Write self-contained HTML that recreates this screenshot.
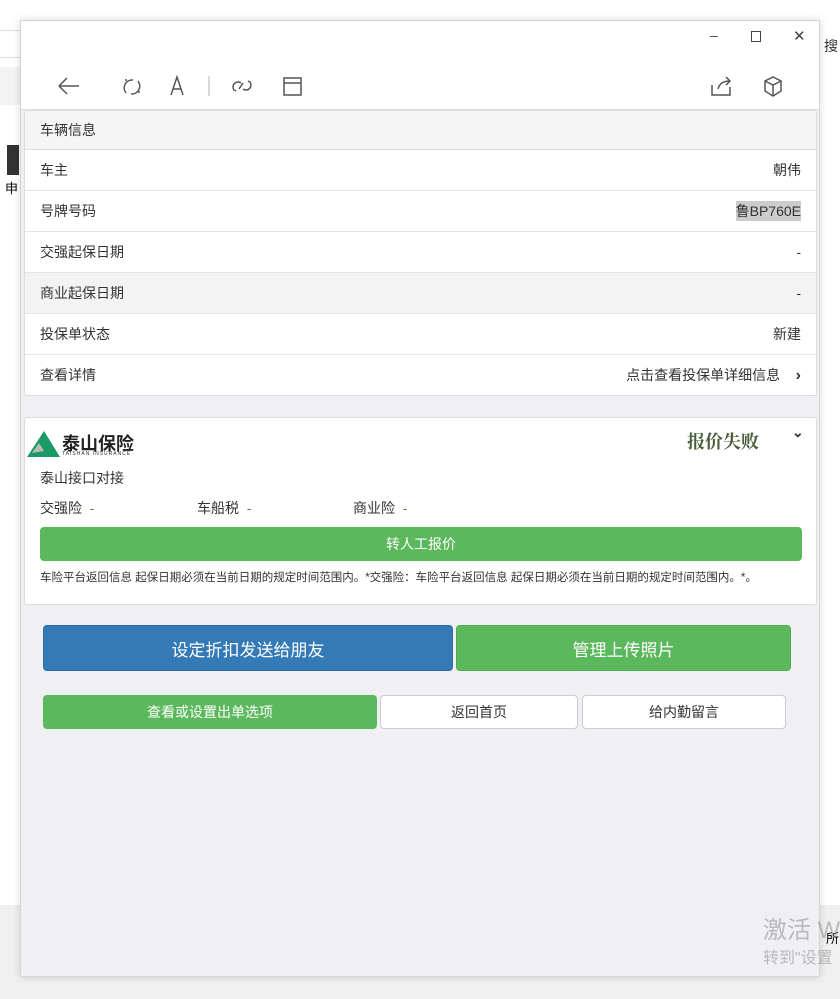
<!DOCTYPE html>
<html><head><meta charset="utf-8"><style>
*{box-sizing:border-box;margin:0;padding:0}
body{width:840px;height:999px;position:relative;background:#fff;font-family:"Liberation Sans","Noto Sans CJK SC",sans-serif;font-size:14px;color:#333;overflow:hidden}
.abs{position:absolute}
.win{position:absolute;left:20px;top:20px;width:800px;height:957px;background:#fff;border:1px solid #d6d6d6;box-shadow:0 0 8px rgba(0,0,0,.15)}
.content{position:absolute;left:0;top:88px;width:798px;height:867px;background:#efeff4;border-top:1px solid #ddd}
.card{position:absolute;left:3px;width:793px;background:#fff;border:1px solid #ddd;border-radius:3px}
.row{height:41px;border-top:1px solid #e5e5e5;display:flex;align-items:center;justify-content:space-between;padding:0 15px;font-size:14px;color:#333}
.btn{position:absolute;border-radius:4px;display:flex;align-items:center;justify-content:center;color:#fff}
</style></head><body>
<div class="abs" style="left:0;top:30px;width:20px;border-top:1px solid #ddd"></div>
<div class="abs" style="left:0;top:57px;width:20px;border-top:1px solid #ddd"></div>
<div class="abs" style="left:0;top:67px;width:20px;height:38px;background:#f3f3f3"></div>
<div class="abs" style="left:0;top:905px;width:840px;height:94px;background:#f0f0f0"></div>
<div class="abs" style="left:7px;top:145px;width:12px;height:30px;background:#333"></div>
<div class="abs" style="left:5px;top:178px;font-size:13px;color:#000">申</div>
<div class="abs" style="left:824px;top:36px;font-size:14px;color:#333">搜</div>
<div class="abs" style="left:826px;top:928px;font-size:13px;color:#000">所</div>
<div class="win">
 <div class="abs" style="left:689px;top:6px;font-size:14px;color:#444">–</div>
 <div class="abs" style="left:730px;top:10px;width:10px;height:11px;border:1.5px solid #444"></div>
 <div class="abs" style="left:772px;top:6px;font-size:15px;color:#444">✕</div>
 <svg class="abs" style="left:30px;top:52px" width="300" height="30" fill="none" stroke="#555" stroke-width="1.5">
  <path d="M8 13H28M8 13L16 5M8 13L16 21"/>
  <path d="M82 7a8 8 0 0 0-7 13M80 21a8 8 0 0 0 7-13M74 7l2 0M89 19l-2 0"/>
  <path d="M120 22L126 4L132 22M122 16H130"/>
  <path d="M158 3V23" stroke="#ccc"/>
  <path d="M190 10a5 5 0 0 0-7 7l2 1M192 16a5 5 0 0 0 7-7l-2-1M188 16l4-6"/>
  <path d="M233 5H250V22H233ZM233 10H250"/>
 </svg>
 <svg class="abs" style="left:685px;top:52px" width="80" height="30" fill="none" stroke="#555" stroke-width="1.5">
  <path d="M6 12V22H24V14M12 16q2-8 12-8M20 4l4 4-4 4"/>
  <path d="M67 4l8 4v10l-8 5-8-5V8ZM59 8l8 4 8-4M67 12v11"/>
 </svg>
 <div class="content">
  <div class="card" style="top:0;height:286px;overflow:hidden">
   <div class="row" style="background:#f5f5f5;border-top:none;height:39px;border-bottom:1px solid #ddd;padding-top:0">车辆信息</div>
   <div class="row" style="border-top:none;height:40px"><span>车主</span><span>朝伟</span></div>
   <div class="row"><span>号牌号码</span><span style="background:#ccc">鲁BP760E</span></div>
   <div class="row"><span>交强起保日期</span><span>-</span></div>
   <div class="row" style="background:#f3f3f3"><span>商业起保日期</span><span>-</span></div>
   <div class="row"><span>投保单状态</span><span>新建</span></div>
   <div class="row"><span>查看详情</span><span>点击查看投保单详细信息 &nbsp;&nbsp;&nbsp;<b style="font-size:16px">›</b></span></div>
  </div>
  <div class="card" style="top:307px;height:188px">
   <svg class="abs" style="left:2px;top:13px" width="36" height="27"><path d="M17 0L33 26H0Z" fill="#1c9a66"/><path d="M5 22L12 12L17 20Z" fill="#bbb"/></svg>
   <div class="abs" style="left:37px;top:12px;font-size:18px;font-weight:bold;color:#222;letter-spacing:0px">泰山保险</div>
   <div class="abs" style="left:37px;top:33px;font-size:5px;color:#333;letter-spacing:1px">TAISHAN INSURANCE</div>
   <div class="abs" style="left:662px;top:10px;font-size:18px;font-weight:bold;color:#4a5d3a;font-family:'Noto Serif CJK SC',serif">报价失败</div>
   <div class="abs" style="left:767px;top:6px;font-size:14px;font-weight:bold;color:#333">⌄</div>
   <div class="abs" style="left:15px;top:50px">泰山接口对接</div>
   <div class="abs" style="left:15px;top:80px">交强险 &nbsp;<span style="color:#8a6d3b">-</span></div>
   <div class="abs" style="left:172px;top:80px">车船税 &nbsp;<span style="color:#8a6d3b">-</span></div>
   <div class="abs" style="left:328px;top:80px">商业险 &nbsp;<span style="color:#8a6d3b">-</span></div>
   <div class="btn" style="left:15px;top:109px;width:762px;height:34px;background:#5cb85c">转人工报价</div>
   <div class="abs" style="left:15px;top:151px;font-size:11.5px;color:#333;white-space:nowrap">车险平台返回信息 起保日期必须在当前日期的规定时间范围内。*交强险：车险平台返回信息 起保日期必须在当前日期的规定时间范围内。*。</div>
  </div>
  <div class="btn" style="left:22px;top:515px;width:410px;height:46px;background:#337ab7;border:1px solid #2e6da4;font-size:17px">设定折扣发送给朋友</div>
  <div class="btn" style="left:435px;top:515px;width:335px;height:46px;background:#5cb85c;border:1px solid #4cae4c;font-size:17px">管理上传照片</div>
  <div class="btn" style="left:22px;top:585px;width:334px;height:34px;background:#5cb85c;font-size:14px">查看或设置出单选项</div>
  <div class="btn" style="left:359px;top:585px;width:198px;height:34px;background:#fff;border:1px solid #ccc;color:#333">返回首页</div>
  <div class="btn" style="left:561px;top:585px;width:204px;height:34px;background:#fff;border:1px solid #ccc;color:#333">给内勤留言</div>
 </div>
</div>
<div class="abs" style="left:763px;top:910px;font-size:24px;color:rgba(150,150,150,.6);white-space:nowrap">激活 W</div>
<div class="abs" style="left:763px;top:944px;font-size:16px;color:rgba(150,150,150,.6);white-space:nowrap">转到"设置</div>
</body></html>
